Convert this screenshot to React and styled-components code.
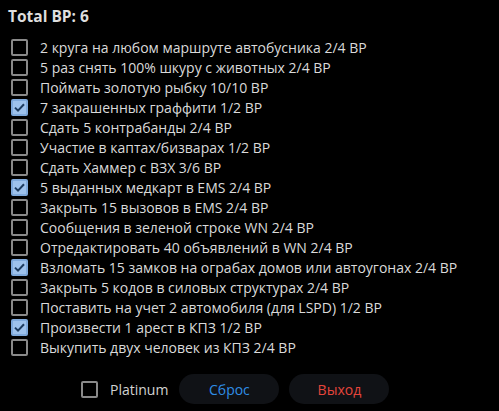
import React, { useState } from "react";
import styled, { createGlobalStyle } from "styled-components";

const GlobalStyle = createGlobalStyle`
  html, body {
    margin: 0;
    background: #000;
  }
  body {
    font-family: "Open Sans", "Noto Sans", sans-serif;
    color: #d6d6d6;
  }
`;

const Page = styled.div`
  width: 499px;
  height: 411px;
  padding: 6px 8px 0 8px;
  box-sizing: border-box;
  background: #000;
`;

const Title = styled.div`
  font-size: 15.5px;
  font-weight: 700;
  line-height: 20px;
  color: #dedede;
  margin-bottom: 11px;
`;

const List = styled.div`
  display: flex;
  flex-direction: column;
`;

const Row = styled.label`
  display: flex;
  align-items: center;
  height: 20px;
  gap: 12px;
  padding-left: 3px;
  font-size: 14px;
  cursor: pointer;
`;

const Box = styled.span`
  width: 17px;
  height: 17px;
  box-sizing: border-box;
  border-radius: 2px;
  flex-shrink: 0;
  display: flex;
  align-items: center;
  justify-content: center;
  border: 2px solid ${(p) => (p.$checked ? "#7fa9db" : "#8a8a8a")};
  background: ${(p) => (p.$checked ? "#9ec2ec" : "transparent")};
`;

const Label = styled.span`
  color: #dadada;
  white-space: nowrap;
`;

const Footer = styled.div`
  display: flex;
  align-items: center;
  margin-top: 17px;
  padding-left: 73px;
`;

const Platinum = styled.label`
  display: flex;
  align-items: center;
  gap: 12px;
  font-size: 14px;
  color: #d2d2d2;
  margin-right: 11px;
  cursor: pointer;
`;

const Button = styled.button`
  width: 100px;
  height: 30px;
  border: none;
  border-radius: 15px;
  background: #101216;
  color: ${(p) => p.$color};
  font-family: inherit;
  font-size: 14px;
  font-weight: 500;
  margin-right: 10px;
  cursor: pointer;
`;

const Check = () => (
  <svg width="13" height="13" viewBox="0 0 13 13">
    <path d="M2 6.6 L5 9.6 L11 3.2" fill="none" stroke="#1d3b5e" strokeWidth="2" />
  </svg>
);

const tasks = [
  ["2 круга на любом маршруте автобусника 2/4 BP", false],
  ["5 раз снять 100% шкуру с животных 2/4 BP", false],
  ["Поймать золотую рыбку 10/10 BP", false],
  ["7 закрашенных граффити 1/2 BP", true],
  ["Сдать 5 контрабанды 2/4 BP", false],
  ["Участие в каптах/бизварах 1/2 BP", false],
  ["Сдать Хаммер с ВЗХ 3/6 BP", false],
  ["5 выданных медкарт в EMS 2/4 BP", true],
  ["Закрыть 15 вызовов в EMS 2/4 BP", false],
  ["Сообщения в зеленой строке WN 2/4 BP", false],
  ["Отредактировать 40 объявлений в WN 2/4 BP", false],
  ["Взломать 15 замков на ограбах домов или автоугонах 2/4 BP", true],
  ["Закрыть 5 кодов в силовых структурах 2/4 BP", false],
  ["Поставить на учет 2 автомобиля (для LSPD) 1/2 BP", false],
  ["Произвести 1 арест в КПЗ 1/2 BP", true],
  ["Выкупить двух человек из КПЗ 2/4 BP", false],
];

export default function App() {
  const [checked] = useState(tasks.map((t) => t[1]));
  return (
    <Page>
      <GlobalStyle />
      <Title>Total BP: 6</Title>
      <List>
        {tasks.map(([text], i) => (
          <Row key={i}>
            <Box $checked={checked[i]}>{checked[i] && <Check />}</Box>
            <Label>{text}</Label>
          </Row>
        ))}
      </List>
      <Footer>
        <Platinum>
          <Box />
          Platinum
        </Platinum>
        <Button $color="#2f8ee6">Сброс</Button>
        <Button $color="#e5453b">Выход</Button>
      </Footer>
    </Page>
  );
}
